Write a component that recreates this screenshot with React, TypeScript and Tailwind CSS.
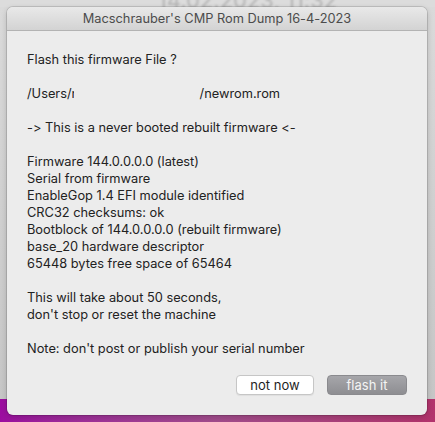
import React from "react";

const details = [
  "Firmware 144.0.0.0.0 (latest)",
  "Serial from firmware",
  "EnableGop 1.4 EFI module identified",
  "CRC32 checksums: ok",
  "Bootblock of 144.0.0.0.0 (rebuilt firmware)",
  "base_20 hardware descriptor",
  "65448 bytes free space of 65464",
];

const App = () => {
  return (
    <div className="relative w-[435px] h-[422px] overflow-hidden font-['Inter','Liberation_Sans',sans-serif] [font-feature-settings:'calt'_0]">
      {/* desktop behind the sheet */}
      <div className="flex flex-col h-full">
        <div className="h-[7px] bg-[#dcdcdc] overflow-hidden flex justify-center pl-[60px]">
          <span className="text-[22px] leading-[22px] -mt-[11px] text-[#b4b4b4] blur-[1px] whitespace-nowrap">
            14.02.2023, 11:32
          </span>
        </div>
        <div className="h-[392px] bg-gradient-to-b from-[#dadada] to-[#c6c6c6]" />
        <div className="flex-1 bg-gradient-to-r from-[#9c0ca0] via-[#a24c8c] to-[#b2336c]" />
      </div>

      {/* alert window */}
      <div className="absolute left-[7px] top-[7px] w-[420px] h-[408px] flex flex-col rounded-[6px] bg-[#ececec] shadow-[0_0_0_1px_rgba(0,0,0,0.12),0_2px_6px_rgba(0,0,0,0.18)] overflow-hidden">
        <div className="h-[24px] shrink-0 flex items-center justify-center bg-gradient-to-b from-[#e9e9e9] to-[#d3d3d3] border-b border-[#b3b3b3] text-[12.8px] text-[#4c4c4c]">
          Macschrauber's CMP Rom Dump 16-4-2023
        </div>

        <div className="flex-1 flex flex-col pl-[20px] pr-[20px] pt-[20px] text-[12.8px] leading-[17px] text-[#222]">
          <p>Flash this firmware File ?</p>
          <p className="h-[17px]" />
          <p className="flex whitespace-nowrap">
            /Users/
            <span className="inline-block w-[2px] overflow-hidden">n</span>
            <span className="inline-block w-[126px]" />
            /newrom.rom
          </p>
          <p className="h-[17px]" />
          <p>-&gt; This is a never booted rebuilt firmware &lt;-</p>
          <p className="h-[17px]" />
          {details.map((line) => (
            <p key={line}>{line}</p>
          ))}
          <p className="h-[17px]" />
          <p>This will take about 50 seconds,</p>
          <p>don't stop or reset the machine</p>
          <p className="h-[17px]" />
          <p>Note: don't post or publish your serial number</p>

          <div className="flex justify-end gap-[13px] mt-[18px]">
            <button className="w-[78px] h-[20px] rounded-[4px] bg-white border border-[#c6c6c6] shadow-[0_1px_1px_rgba(0,0,0,0.06)] text-[13px] leading-none text-[#1e1e1e]">
              not now
            </button>
            <button className="w-[80px] h-[20px] rounded-[4px] bg-gradient-to-b from-[#a6a6aa] to-[#8e8e92] border border-[#8a8a8e] text-[13px] leading-none text-[#f4f4f4]">
              flash it
            </button>
          </div>
        </div>
      </div>
    </div>
  );
};

export default App;
